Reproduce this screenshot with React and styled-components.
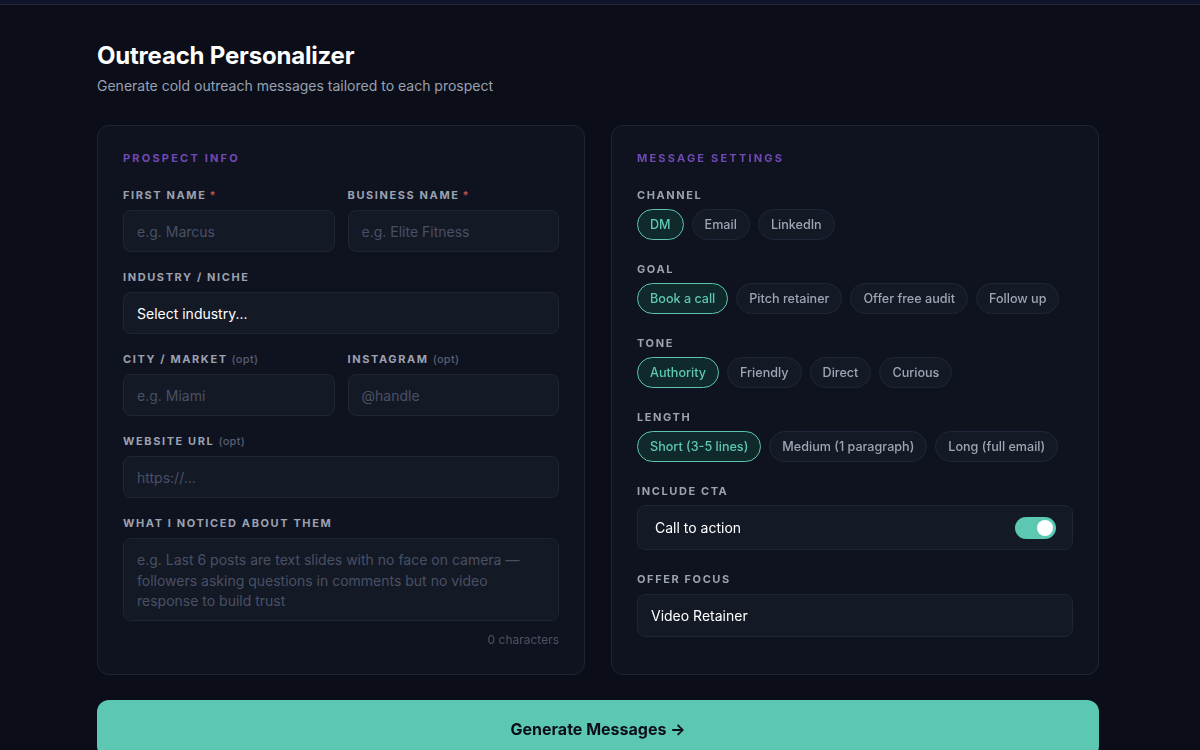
import React, { useState } from 'react';
import styled, { createGlobalStyle } from 'styled-components';

const GlobalStyle = createGlobalStyle`
  body {
    margin: 0;
    background: #0b0e19;
    font-family: Inter, "Noto Sans", "Liberation Sans", sans-serif;
    color: #e8eaf0;
  }
  * { box-sizing: border-box; }
`;

const TopBar = styled.div`
  height: 5px;
  background: #10142a;
  border-bottom: 1px solid #232838;
`;

const Page = styled.div`
  width: 1002px;
  margin-left: 97px;
  padding-top: 36px;
`;

const Title = styled.h1`
  margin: 0;
  font-size: 24px;
  line-height: 30px;
  font-weight: 700;
  color: #ffffff;
  letter-spacing: -0.2px;
`;

const Subtitle = styled.p`
  margin: 5px 0 0;
  font-size: 14px;
  line-height: 20px;
  color: #9aa0b0;
`;

const Columns = styled.div`
  margin-top: 29px;
  display: grid;
  grid-template-columns: minmax(0, 1fr) minmax(0, 1fr);
  gap: 26px;
`;

const Card = styled.div`
  background: #0f1320;
  border: 1px solid #1f2434;
  border-radius: 12px;
  padding: 25px 25px 26px;
`;

const SectionTitle = styled.div`
  font-size: 11px;
  line-height: 14px;
  font-weight: 700;
  letter-spacing: 2.2px;
  color: #7049b4;
  text-transform: uppercase;
  margin-bottom: 23px;
`;

const Stack = styled.div`
  display: flex;
  flex-direction: column;
  gap: ${(p) => p.$gap}px;
`;

const Row = styled.div`
  display: grid;
  grid-template-columns: minmax(0, 1fr) minmax(0, 1fr);
  gap: 13px;
`;

const Field = styled.div`
  display: flex;
  flex-direction: column;
  min-width: 0;
`;

const Label = styled.label`
  font-size: 11px;
  line-height: 14px;
  font-weight: 700;
  letter-spacing: 1.6px;
  color: #9ca1b0;
  text-transform: uppercase;
  margin-bottom: ${(p) => p.$gap || 8}px;
`;

const Req = styled.span`
  color: #c0504f;
  margin-left: 3px;
`;

const Opt = styled.span`
  color: #565c6f;
  font-weight: 500;
  letter-spacing: 0.3px;
  text-transform: none;
  margin-left: 4px;
`;

const Input = styled.input`
  width: 100%;
  height: 42px;
  background: #141926;
  border: 1px solid #1f2536;
  border-radius: 8px;
  padding: 0 13px;
  font-family: inherit;
  font-size: 14px;
  color: #e8eaf0;
  outline: none;
  &::placeholder { color: #4a5064; }
`;

const SelectBox = styled.div`
  height: ${(p) => p.$h || 42}px;
  background: #141926;
  border: 1px solid #1f2536;
  border-radius: 8px;
  padding: 0 13px;
  display: flex;
  align-items: center;
  font-size: 14px;
  color: #ffffff;
`;

const TextArea = styled.textarea`
  width: 100%;
  height: 83px;
  background: #141926;
  border: 1px solid #1f2536;
  border-radius: 8px;
  padding: 11px 13px;
  font-family: inherit;
  font-size: 14px;
  line-height: 20.5px;
  color: #e8eaf0;
  resize: none;
  outline: none;
  &::placeholder { color: #4a5064; }
`;

const CharCount = styled.div`
  margin-top: 11px;
  text-align: right;
  font-size: 12px;
  line-height: 16px;
  color: #4d5366;
`;

const Chips = styled.div`
  display: flex;
  flex-wrap: wrap;
  gap: 8px;
`;

const Chip = styled.button`
  height: 31px;
  padding: 0 12px;
  border-radius: 999px;
  font-family: inherit;
  font-size: 12.6px;
  font-weight: 500;
  cursor: pointer;
  border: 1px solid ${(p) => (p.$active ? '#5cc4ae' : '#20263a')};
  background: ${(p) => (p.$active ? '#10292a' : '#141926')};
  color: ${(p) => (p.$active ? '#5ec8b2' : '#a0a5b5')};
`;

const ToggleRow = styled.div`
  height: 45px;
  background: #141926;
  border: 1px solid #1f2536;
  border-radius: 8px;
  padding: 0 16px 0 17px;
  display: flex;
  align-items: center;
  justify-content: space-between;
  font-size: 14px;
  color: #ffffff;
`;

const Toggle = styled.button`
  width: 41px;
  height: 22px;
  border-radius: 999px;
  border: none;
  padding: 0 3px;
  display: flex;
  align-items: center;
  justify-content: ${(p) => (p.$on ? 'flex-end' : 'flex-start')};
  background: ${(p) => (p.$on ? '#5cc8b4' : '#2a3042')};
  cursor: pointer;
  &::after {
    content: '';
    width: 16px;
    height: 16px;
    border-radius: 50%;
    background: #ffffff;
  }
`;

const GenerateButton = styled.button`
  margin-top: 25px;
  width: 100%;
  height: 58px;
  border: none;
  border-radius: 12px;
  background: #5cc8b4;
  color: #0b0e19;
  font-family: inherit;
  font-size: 16px;
  font-weight: 700;
  cursor: pointer;
`;

const ChipGroup = ({ label, options, value, onChange }) => (
  <Field>
    <Label $gap={7}>{label}</Label>
    <Chips>
      {options.map((o) => (
        <Chip key={o} $active={o === value} onClick={() => onChange(o)}>
          {o}
        </Chip>
      ))}
    </Chips>
  </Field>
);

const App = () => {
  const [channel, setChannel] = useState('DM');
  const [goal, setGoal] = useState('Book a call');
  const [tone, setTone] = useState('Authority');
  const [length, setLength] = useState('Short (3-5 lines)');
  const [cta, setCta] = useState(true);
  const [notes, setNotes] = useState('');

  return (
    <>
      <GlobalStyle />
      <TopBar />
      <Page>
        <Title>Outreach Personalizer</Title>
        <Subtitle>Generate cold outreach messages tailored to each prospect</Subtitle>

        <Columns>
          <Card>
            <SectionTitle>Prospect Info</SectionTitle>
            <Stack $gap={18}>
              <Row>
                <Field>
                  <Label>First Name<Req>*</Req></Label>
                  <Input placeholder="e.g. Marcus" />
                </Field>
                <Field>
                  <Label>Business Name<Req>*</Req></Label>
                  <Input placeholder="e.g. Elite Fitness" />
                </Field>
              </Row>
              <Field>
                <Label>Industry / Niche</Label>
                <SelectBox>Select industry...</SelectBox>
              </Field>
              <Row>
                <Field>
                  <Label>City / Market<Opt>(opt)</Opt></Label>
                  <Input placeholder="e.g. Miami" />
                </Field>
                <Field>
                  <Label>Instagram<Opt>(opt)</Opt></Label>
                  <Input placeholder="@handle" />
                </Field>
              </Row>
              <Field>
                <Label>Website URL<Opt>(opt)</Opt></Label>
                <Input placeholder="https://..." />
              </Field>
              <Field>
                <Label>What I noticed about them</Label>
                <TextArea
                  value={notes}
                  onChange={(e) => setNotes(e.target.value)}
                  placeholder="e.g. Last 6 posts are text slides with no face on camera — followers asking questions in comments but no video response to build trust"
                />
                <CharCount>{notes.length} characters</CharCount>
              </Field>
            </Stack>
          </Card>

          <Card>
            <SectionTitle>Message Settings</SectionTitle>
            <Stack $gap={22}>
              <ChipGroup label="Channel" options={['DM', 'Email', 'LinkedIn']} value={channel} onChange={setChannel} />
              <ChipGroup
                label="Goal"
                options={['Book a call', 'Pitch retainer', 'Offer free audit', 'Follow up']}
                value={goal}
                onChange={setGoal}
              />
              <ChipGroup
                label="Tone"
                options={['Authority', 'Friendly', 'Direct', 'Curious']}
                value={tone}
                onChange={setTone}
              />
              <ChipGroup
                label="Length"
                options={['Short (3-5 lines)', 'Medium (1 paragraph)', 'Long (full email)']}
                value={length}
                onChange={setLength}
              />
              <Field>
                <Label $gap={7}>Include CTA</Label>
                <ToggleRow>
                  Call to action
                  <Toggle $on={cta} onClick={() => setCta(!cta)} />
                </ToggleRow>
              </Field>
              <Field>
                <Label>Offer Focus</Label>
                <SelectBox $h={43}>Video Retainer</SelectBox>
              </Field>
            </Stack>
          </Card>
        </Columns>

        <GenerateButton>Generate Messages →</GenerateButton>
      </Page>
    </>
  );
};

export default App;
